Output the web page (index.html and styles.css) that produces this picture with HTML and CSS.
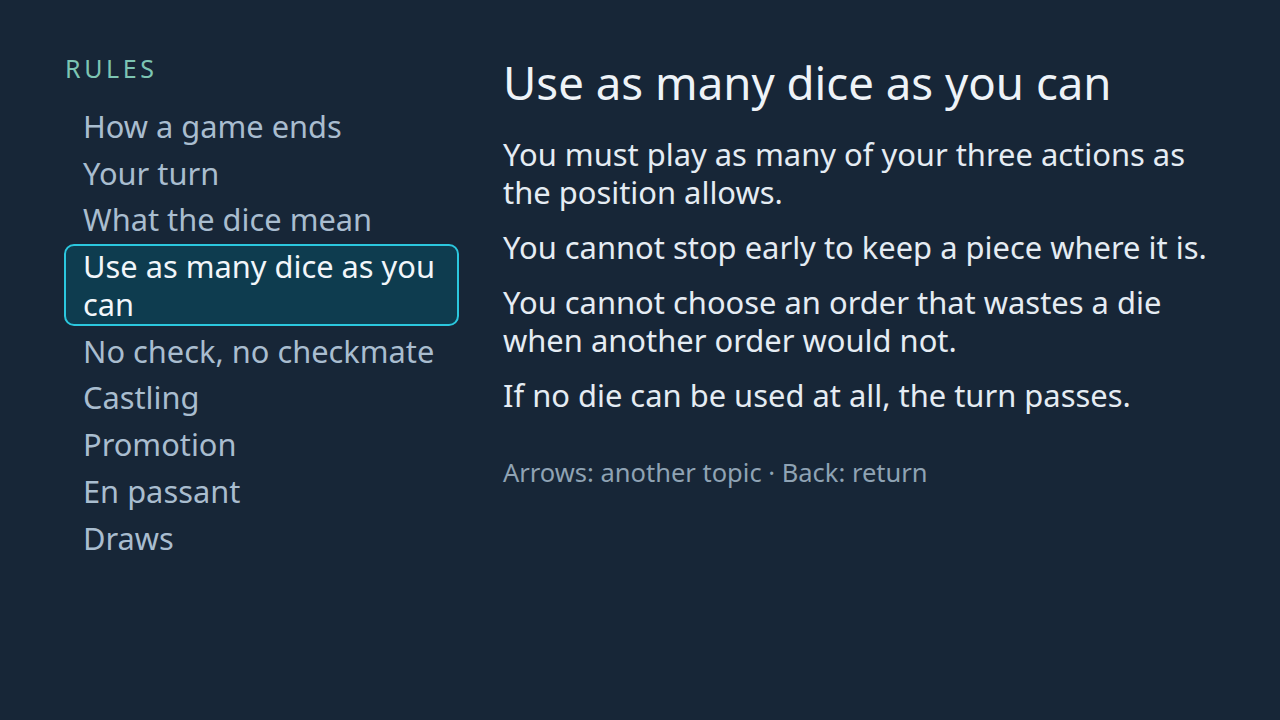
FILE: index.html
```html
<!DOCTYPE html>
<html lang="en">
<head>
<meta charset="utf-8">
<title>Rules</title>
<link rel="stylesheet" href="styles.css">
</head>
<body>
<div class="screen">
  <nav class="sidebar">
    <div class="label">RULES</div>
    <ul class="topics">
      <li class="topic">How a game ends</li>
      <li class="topic">Your turn</li>
      <li class="topic">What the dice mean</li>
      <li class="topic selected">Use as many dice as you can</li>
      <li class="topic">No check, no checkmate</li>
      <li class="topic">Castling</li>
      <li class="topic">Promotion</li>
      <li class="topic">En passant</li>
      <li class="topic">Draws</li>
    </ul>
  </nav>
  <main class="content">
    <h1 class="title">Use as many dice as you can</h1>
    <p class="para">You must play as many of your three actions as the position allows.</p>
    <p class="para">You cannot stop early to keep a piece where it is.</p>
    <p class="para">You cannot choose an order that wastes a die when another order would not.</p>
    <p class="para">If no die can be used at all, the turn passes.</p>
    <p class="hint">Arrows: another topic · Back: return</p>
  </main>
</div>
</body>
</html>
```
FILE: styles.css
```css
html, body {
  margin: 0;
  padding: 0;
  background: #172637;
}
body {
  font-family: "Noto Sans", "Open Sans", sans-serif;
  width: 1280px;
  height: 720px;
  overflow: hidden;
}
.screen {
  display: flex;
  padding: 54px 0 0 64px;
  gap: 44px;
}
.sidebar {
  width: 395px;
  flex: none;
}
.label {
  color: #7dc5b3;
  font-size: 25px;
  line-height: 30px;
  letter-spacing: 3.6px;
  padding-left: 1px;
  margin-bottom: 21px;
  margin-top: -1px;
}
.topics {
  list-style: none;
  margin: 0;
  padding: 0;
  display: flex;
  flex-direction: column;
  gap: 3.2px;
}
.topic {
  color: #a9bdcf;
  font-size: 30.8px;
  line-height: 38px;
  padding: 1px 17px 0.5px;
  border: 2px solid transparent;
  border-radius: 10px;
}
.topic.selected {
  color: #f2f6fa;
  background: #0e3c4f;
  border-color: #2bc7de;
}
.content {
  width: 720px;
  flex: none;
  padding-top: 2px;
}
.title {
  margin: 0 0 27px;
  color: #eef3f8;
  font-size: 45.6px;
  font-weight: 400;
  line-height: 52px;
}
.para {
  margin: 0 0 17px;
  color: #e5ecf3;
  font-size: 30.9px;
  line-height: 38px;
}
.hint {
  margin: 42px 0 0;
  color: #8fa3b4;
  font-size: 25.5px;
  line-height: 32px;
}
```
